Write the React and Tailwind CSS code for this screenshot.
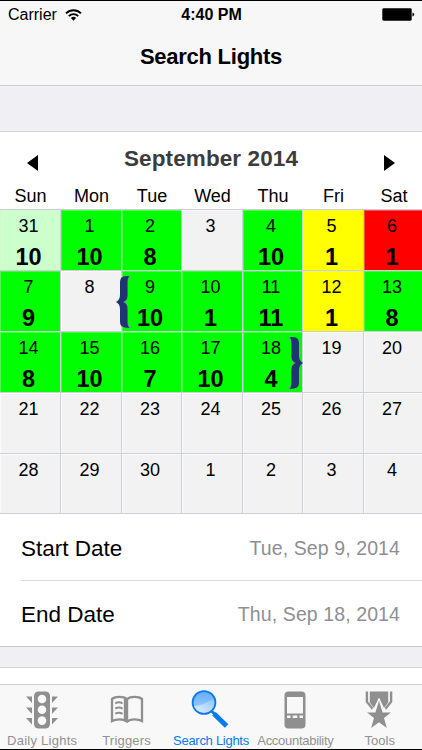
import React from 'react';
import clsx from 'clsx';

const WEEKDAYS = ['Sun', 'Mon', 'Tue', 'Wed', 'Thu', 'Fri', 'Sat'];

const COLORS = {
  pale: 'bg-[#ccffcc]',
  green: 'bg-[#00ff00]',
  yellow: 'bg-[#ffff00]',
  red: 'bg-[#ff0000]',
};

const WEEKS = [
  [
    { day: 31, count: 10, color: 'pale' },
    { day: 1, count: 10, color: 'green' },
    { day: 2, count: 8, color: 'green' },
    { day: 3 },
    { day: 4, count: 10, color: 'green' },
    { day: 5, count: 1, color: 'yellow' },
    { day: 6, count: 1, color: 'red' },
  ],
  [
    { day: 7, count: 9, color: 'green' },
    { day: 8 },
    { day: 9, count: 10, color: 'green', mark: 'start' },
    { day: 10, count: 1, color: 'green' },
    { day: 11, count: 11, color: 'green' },
    { day: 12, count: 1, color: 'yellow' },
    { day: 13, count: 8, color: 'green' },
  ],
  [
    { day: 14, count: 8, color: 'green' },
    { day: 15, count: 10, color: 'green' },
    { day: 16, count: 7, color: 'green' },
    { day: 17, count: 10, color: 'green' },
    { day: 18, count: 4, color: 'green', mark: 'end' },
    { day: 19 },
    { day: 20 },
  ],
  [21, 22, 23, 24, 25, 26, 27].map((day) => ({ day })),
  [28, 29, 30, 1, 2, 3, 4].map((day) => ({ day })),
];

const GRID = 'grid w-[424px] grid-cols-[61px_61px_60px_61px_60px_61px_60px]';

const WifiIcon = () => (
  <svg width="17" height="12" viewBox="0 0 17 12" fill="none" stroke="#000" strokeWidth="1.9">
    <path d="M1 4.3a10.6 10.6 0 0 1 15 0" />
    <path d="M3.8 7.1a6.7 6.7 0 0 1 9.4 0" />
    <path d="M8.5 11.7 5.9 9.1a3.7 3.7 0 0 1 5.2 0z" fill="#000" stroke="none" />
  </svg>
);

const BatteryIcon = () => (
  <svg width="33" height="13" viewBox="0 0 33 13">
    <rect x="0.3" y="0.3" width="29.4" height="12.4" rx="1.4" />
    <path d="M30.5 4.6q1.7.5 1.7 1.9t-1.7 1.9z" />
  </svg>
);

const TrafficLightIcon = () => (
  <svg width="34" height="38" viewBox="0 0 34 38" fill="#8f8f8f">
    <rect x="9" y="0.5" width="16" height="37" rx="4.5" />
    <circle cx="17" cy="8" r="4.3" fill="#f8f8f8" />
    <circle cx="17" cy="18.8" r="4.3" fill="#f8f8f8" />
    <circle cx="17" cy="29.6" r="4.3" fill="#f8f8f8" />
    <path d="M1 5.5h6v6.5zM1 16.5h6V23zM1 27h6v6.5zM33 5.5h-6v6.5zM33 16.5h-6V23zM33 27h-6v6.5z" />
  </svg>
);

const BookIcon = () => (
  <svg width="34" height="38" viewBox="0 0 34 38" fill="none" stroke="#8f8f8f" strokeWidth="2.3">
    <path d="M17 8.1Q14.5 5.9 9.5 5.9q-5 0-7.5 2.1v22q3-1.7 7.5-1.7 5 0 7.5 2.3 2.5-2.3 7.5-2.3 4.5 0 7.5 1.7V8q-2.5-2.1-7.5-2.1-5 0-7.5 2.2z" />
    <path d="M16 7.8v22.5" strokeWidth="4.4" />
    <path d="M5.3 12.3q4-2.2 7.2.2M5.3 17.5q4-2.2 7.2.2M5.3 22.7q4-2.2 7.2.2" strokeWidth="2" />
  </svg>
);

const MagnifierIcon = () => (
  <svg width="38" height="38" viewBox="0 0 38 38" className="overflow-visible">
    <defs>
      <linearGradient id="lens" x1="0" y1="0" x2="0" y2="1">
        <stop offset="0" stopColor="#62adfb" />
        <stop offset="1" stopColor="#a9d2fc" />
      </linearGradient>
      <linearGradient id="shade" x1="0" y1="0.8" x2="1" y2="0">
        <stop offset="0" stopColor="#e0effd" />
        <stop offset="1" stopColor="#8bc2fb" />
      </linearGradient>
    </defs>
    <path d="M19.5 20l5 5" stroke="#087aee" strokeWidth="2.8" />
    <path d="M22 22.8l12.6 12.2" stroke="#087aee" strokeWidth="5" />
    <circle cx="12" cy="11.5" r="11.5" fill="url(#lens)" />
    <path d="M1 15.3Q11 15 23 6.8a11.5 11.5 0 0 1-22 8.5z" fill="url(#shade)" />
    <circle cx="12" cy="11.5" r="11.4" fill="none" stroke="#087aee" strokeWidth="1.8" />
  </svg>
);

const PhoneIcon = () => (
  <svg width="24" height="38" viewBox="0 0 24 38" fill="#8f8f8f">
    <rect x="1.5" y="0.5" width="21" height="37" rx="4" />
    <path d="M4 6h16v16.5H4z" fill="#f8f8f8" />
    <path d="M4 24.5h3.5v2.5H4zM9.7 24.5h4.6v2.5H9.7zM16.5 24.5H20v2.5h-3.5z" fill="#f8f8f8" />
  </svg>
);

const MedalIcon = () => (
  <svg width="28" height="38" viewBox="0 0 28 38" fill="#8f8f8f" className="relative right-px">
    <path d="M.7.5h2.4v10l4.9 6-1 2.6L.7 11zM27.3.5h-2.4v10l-4.9 6 1 2.6 6.3-8.1z" />
    <path d="M4.8.5h7.8v9L8.9 17l-4.1-5.6zM23.2.5h-7.8v9l3.7 7.5 4.1-5.6z" />
    <path d="M12 .5h4v9l-2-2.7-2 2.7z" />
    <path d="M14 9.8l3.6 11.7H26l-7 5.6L21.8 37 14 31.3 6.2 37 9 27.1l-7-5.6h8.4z" />
  </svg>
);

// Curly bracket drawn over the first and last day of the selected range
const Bracket = ({ side }) => (
  <svg
    width="17"
    height="54"
    viewBox="0 0 17 54"
    className={clsx(
      'absolute z-10',
      side === 'start' ? '-left-[6px] top-[4px]' : 'left-[43px] top-[4px] -scale-x-100'
    )}
  >
    <path
      d="M16 1.5Q9 .5 7 3.5V50q2 3.5 9.3 3-4.3-1.5-4.3-7V33.5q0-4.5-3-6.2 3-1.7 3-6V8q0-5.5 4-6.5z"
      fill="#7e8fa5"
      opacity=".85"
    />
    <path
      d="M13.5 1.2Q7 .5 5 3.3q-1 1.3-1 4v12.5q0 5.4-4 7.2 4 1.8 4 7.5v12q0 2.5 1 4 2 2.5 8.5 2.3-2-1.5-2-6V34q0-5.3-4.3-7 4.3-1.7 4.3-6.5V7q0-4.5 2-5.8z"
      fill="#203471"
    />
  </svg>
);

const DayCell = ({ day, count, color, mark }) => (
  <div
    className={clsx(
      'relative flex flex-col items-center border-r border-b border-[#cdd1d5] pr-[3px] pt-[5px]',
      color
        ? [COLORS[color], 'shadow-[inset_1px_1px_0_rgba(225,225,225,0.35)]']
        : 'bg-[#f2f2f2] shadow-[inset_1px_1px_0_#fafafa]'
    )}
  >
    <span className="text-[18px] leading-[22px]">{day}</span>
    {count && <span className="mt-[7px] text-[23.5px] leading-[26px] font-bold">{count}</span>}
    {mark && <Bracket side={mark} />}
  </div>
);

const DateRow = ({ label, value }) => (
  <div className="flex flex-1 items-center justify-between pr-[22px] pt-[2px]">
    <span className="text-[22.5px]">{label}</span>
    <span className="text-[19.5px] tracking-[0.1px] text-[#8e8e93]">{value}</span>
  </div>
);

const TABS = [
  { label: 'Daily Lights', icon: <TrafficLightIcon />, spacing: 'tracking-[0.25px]' },
  { label: 'Triggers', icon: <BookIcon />, spacing: 'tracking-[0.2px]' },
  { label: 'Search Lights', icon: <MagnifierIcon />, spacing: 'tracking-[-0.28px]', active: true },
  { label: 'Accountability', icon: <PhoneIcon />, spacing: 'tracking-[-0.28px]' },
  { label: 'Tools', icon: <MedalIcon />, spacing: 'tracking-normal' },
];

const App = () => {
  return (
    <div className="flex h-[750px] w-[422px] flex-col overflow-hidden border-y border-black bg-[#efeff4] font-['Liberation_Sans',Arial,sans-serif] text-black">
      {/* Status bar and title */}
      <header className="h-[85px] shrink-0 border-b border-[#cfcfd3] bg-[#f7f7f8]">
        <div className="grid h-[27px] grid-cols-3 items-center pl-2 pr-[7px] text-[16px]">
          <div className="flex items-center gap-2">
            <span>Carrier</span>
            <WifiIcon />
          </div>
          <span className="text-center font-bold">4:40 PM</span>
          <div className="flex justify-end">
            <BatteryIcon />
          </div>
        </div>
        <h1 className="mt-[16px] text-center text-[22px] leading-[26px] font-bold tracking-[-0.25px]">
          Search Lights
        </h1>
      </header>

      {/* Calendar */}
      <section className="mt-[45px] shrink-0 overflow-hidden border-t border-[#d3d3d8] bg-white">
        <div className="flex h-[50px] items-center justify-between pl-[27px] pr-[27px] pt-[3px]">
          <svg width="11" height="16" viewBox="0 0 11 16" className="mt-[8px]">
            <path d="M11 0v16L0 8z" />
          </svg>
          <h2 className="text-[22.5px] font-bold tracking-[0.1px] text-[#3c3c3c]">September 2014</h2>
          <svg width="11" height="16" viewBox="0 0 11 16" className="mt-[8px]">
            <path d="M0 0v16l11-8z" />
          </svg>
        </div>
        <div className={clsx(GRID, 'h-[28px] border-b border-[#cdd1d5] text-center text-[18px] leading-[28px]')}>
          {WEEKDAYS.map((name) => (
            <span key={name}>{name}</span>
          ))}
        </div>
        <div className={clsx(GRID, 'grid-rows-[61px_61px_61px_61px_60px]')}>
          {WEEKS.flat().map((cell, index) => (
            <DayCell key={index} {...cell} />
          ))}
        </div>
      </section>

      {/* Selected range */}
      <section className="flex h-[133px] shrink-0 flex-col border-b border-[#c8c7cc] bg-white pl-[21px] pt-px">
        <DateRow label="Start Date" value="Tue, Sep 9, 2014" />
        <div className="h-px bg-[#dddddf]" />
        <DateRow label="End Date" value="Thu, Sep 18, 2014" />
      </section>

      <div className="mt-[20px] h-[17px] shrink-0 border-t border-[#d3d3d8] bg-white" />

      {/* Tab bar */}
      <nav className="grid flex-1 grid-cols-5 border-t border-[#cdcdcd] bg-[#f8f8f8] pt-[6px]">
        {TABS.map((tab) => (
          <button
            key={tab.label}
            className={clsx(
              'flex flex-col items-center text-[13px] leading-[16px] whitespace-nowrap',
              tab.spacing,
              tab.active ? 'text-[#087aee]' : 'text-[#929292]'
            )}
          >
            {tab.icon}
            <span className="mt-[4px]">{tab.label}</span>
          </button>
        ))}
      </nav>
    </div>
  );
};

export default App;
